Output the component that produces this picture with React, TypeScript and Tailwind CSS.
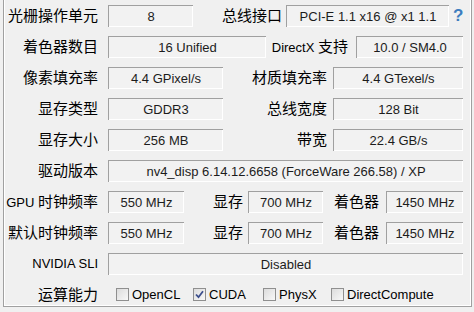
import React from 'react';

const CJK = /([\u3400-\u9fff]+)/;

// mixed latin / chinese text: chinese runs a bit bigger, like the original dialog font
const Txt = ({ t }: { t: string }) => (
  <>
    {t
      .split(CJK)
      .filter(Boolean)
      .map((s, i) =>
        CJK.test(s) ? (
          <span key={i} className="text-[15px]">
            {s}
          </span>
        ) : (
          <span key={i}>{s}</span>
        )
      )}
  </>
);

const Label = ({ t, className }: { t: string; className: string }) => (
  <div className={`shrink-0 whitespace-nowrap text-right leading-none ${className}`}>
    <Txt t={t} />
  </div>
);

const Field = ({ v, className }: { v: string; className: string }) => (
  <div
    className={`h-[22px] shrink-0 flex items-center justify-center whitespace-nowrap leading-none text-[#1c1c1c] bg-[#f2f2f2] border-t border-l border-[#a0a0a0] shadow-[inset_-1px_-1px_0_#ffffff] ${className}`}
  >
    {v}
  </div>
);

const Row = ({ children }: { children: React.ReactNode }) => (
  <div className="h-[31px] shrink-0 flex items-center pr-[8px]">{children}</div>
);

const Check = ({ label, checked, className }: { label: string; checked?: boolean; className: string }) => (
  <div className={`flex items-center shrink-0 ${className}`}>
    <div className="w-[13px] h-[13px] border border-[#8f8f8f] bg-gradient-to-br from-[#dcdcdc] to-[#f8f8f8] flex items-center justify-center">
      {checked && (
        <svg width="9" height="9" viewBox="0 0 9 9">
          <path d="M1 4.5 L3.5 7.2 L8 1.2" fill="none" stroke="#3c4e8c" strokeWidth="1.8" />
        </svg>
      )}
    </div>
    <span className="ml-[3px] leading-none">{label}</span>
  </div>
);

export default function App() {
  return (
    <div className="w-[474px] h-[312px] bg-[#f0f0f0] overflow-hidden text-[13px] text-black font-['Liberation_Sans','Noto_Sans_CJK_SC',sans-serif]">
      <div className="ml-[3px] w-[469px] h-[307px] pl-[1px] border-x border-b border-[#a0a0a0] shadow-[inset_1px_0_0_#ffffff,inset_-1px_-1px_0_#ffffff] flex flex-col">
        <Row>
          <Label t="光栅操作单元" className="w-[93px]" />
          <Field v="8" className="ml-[10px] w-[85px]" />
          <Label t="总线接口" className="flex-1 pr-[4px]" />
          <Field v="PCI-E 1.1 x16 @ x1 1.1" className="w-[163px]" />
          <span className="ml-[4px] w-[10px] text-[17px] font-bold leading-none text-[#3d7dbf]">?</span>
        </Row>
        <Row>
          <Label t="着色器数目" className="w-[93px]" />
          <Field v="16 Unified" className="ml-[10px] w-[158px]" />
          <Label t="DirectX 支持" className="flex-1 pr-[8px]" />
          <Field v="10.0 / SM4.0" className="w-[107px]" />
        </Row>
        <Row>
          <Label t="像素填充率" className="w-[93px]" />
          <Field v="4.4 GPixel/s" className="ml-[10px] w-[115px]" />
          <Label t="材质填充率" className="flex-1 pr-[6px]" />
          <Field v="4.4 GTexel/s" className="w-[130px]" />
        </Row>
        <Row>
          <Label t="显存类型" className="w-[93px]" />
          <Field v="GDDR3" className="ml-[10px] w-[115px]" />
          <Label t="总线宽度" className="flex-1 pr-[6px]" />
          <Field v="128 Bit" className="w-[130px]" />
        </Row>
        <Row>
          <Label t="显存大小" className="w-[93px]" />
          <Field v="256 MB" className="ml-[10px] w-[115px]" />
          <Label t="带宽" className="flex-1 pr-[6px]" />
          <Field v="22.4 GB/s" className="w-[130px]" />
        </Row>
        <Row>
          <Label t="驱动版本" className="w-[93px]" />
          <Field v="nv4_disp 6.14.12.6658 (ForceWare 266.58) / XP" className="ml-[10px] flex-1" />
        </Row>
        <Row>
          <Label t="GPU 时钟频率" className="w-[93px]" />
          <Field v="550 MHz" className="ml-[10px] w-[76px]" />
          <Label t="显存" className="w-[64px] pr-[5px]" />
          <Field v="700 MHz" className="w-[75px]" />
          <Label t="着色器" className="w-[63px] pr-[7px]" />
          <Field v="1450 MHz" className="flex-1" />
        </Row>
        <Row>
          <Label t="默认时钟频率" className="w-[93px]" />
          <Field v="550 MHz" className="ml-[10px] w-[76px]" />
          <Label t="显存" className="w-[64px] pr-[5px]" />
          <Field v="700 MHz" className="w-[75px]" />
          <Label t="着色器" className="w-[63px] pr-[7px]" />
          <Field v="1450 MHz" className="flex-1" />
        </Row>
        <Row>
          <Label t="NVIDIA SLI" className="w-[93px]" />
          <Field v="Disabled" className="ml-[10px] flex-1" />
        </Row>
        <Row>
          <Label t="运算能力" className="w-[93px]" />
          <div className="ml-[18px] flex items-center">
            <Check label="OpenCL" className="w-[77px]" />
            <Check label="CUDA" checked className="w-[70px]" />
            <Check label="PhysX" className="w-[68px]" />
            <Check label="DirectCompute" className="w-[110px]" />
          </div>
        </Row>
      </div>
    </div>
  );
}
